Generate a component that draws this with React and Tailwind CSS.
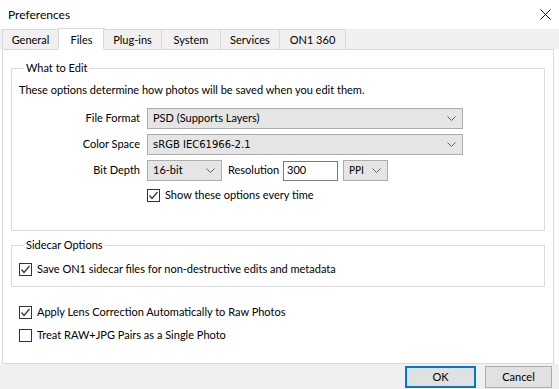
import React from 'react';

const font = { fontFamily: 'Lato, "Noto Sans", sans-serif' };

function Chevron() {
  return (
    <svg width="9" height="5" viewBox="0 0 9 5" className="shrink-0">
      <path d="M0.5 0.5 L4.5 4.5 L8.5 0.5" fill="none" stroke="#606060" strokeWidth="1" />
    </svg>
  );
}

function Select({ value, className, mono }) {
  return (
    <div
      className={
        'h-[21px] flex items-center justify-between pl-[5px] pr-[6px] border border-[#adadad] bg-[#e5e5e5] text-black ' +
        className
      }
    >
      <span className={mono ? 'font-["DejaVu_Sans"] text-[10px]' : ''}>{value}</span>
      <Chevron />
    </div>
  );
}

function Check({ checked, label, className }) {
  return (
    <div className={'flex items-center gap-[5px] h-[16px] ' + (className || '')}>
      <div className="w-[13px] h-[13px] border border-[#333] bg-white flex items-center justify-center">
        {checked && (
          <svg width="11" height="11" viewBox="0 0 11 11">
            <path d="M1.5 5.5 L4 8.5 L9.5 2" fill="none" stroke="#333" strokeWidth="1.2" />
          </svg>
        )}
      </div>
      <span>{label}</span>
    </div>
  );
}

const tabs = [
  { name: 'General', w: 'w-[57px]' },
  { name: 'Files', w: 'w-[47px]', active: true },
  { name: 'Plug-ins', w: 'w-[59px]' },
  { name: 'System', w: 'w-[60px]' },
  { name: 'Services', w: 'w-[60px]' },
  { name: 'ON1 360', w: 'w-[67px]' },
];

export default function App() {
  return (
    <div style={font} className="w-[559px] h-[389px] bg-white flex flex-col text-[11px] text-black overflow-hidden">
      {/* title bar */}
      <div className="h-[29px] flex items-center justify-between pl-[8px] pr-[8px] shrink-0">
        <span className="text-[12px] leading-none">Preferences</span>
        <svg width="11" height="11" viewBox="0 0 11 11">
          <path d="M0.5 0.5 L10.5 10.5 M10.5 0.5 L0.5 10.5" stroke="#111" strokeWidth="1" />
        </svg>
      </div>

      {/* tabs */}
      <div className="h-[20px] flex items-end pl-[2px] bg-[#f0f0f0] shrink-0 relative z-10">
        {tabs.map((t) =>
          t.active ? (
            <div
              key={t.name}
              className={t.w + ' h-[22px] -mb-[1px] -mx-[1px] bg-white border border-b-0 border-[#d9d9d9] flex items-center justify-center leading-none'}
            >
              {t.name}
            </div>
          ) : (
            <div
              key={t.name}
              className={t.w + ' h-[20px] bg-[#f0f0f0] border border-b-0 border-[#d9d9d9] -ml-[1px] first:ml-0 flex items-center justify-center leading-none'}
            >
              {t.name}
            </div>
          )
        )}
      </div>

      {/* panel */}
      <div className="flex-1 ml-[2px] mr-[5px] border border-[#d9d9d9] bg-white px-[8px] pt-[10px]">
        <fieldset className="border border-[#dcdcdc] h-[171px] px-[7px]">
          <legend className="ml-[5px] px-[2px] leading-[16px]">What to Edit</legend>
          <p className="mt-[6px] leading-[16px]">These options determine how photos will be saved when you edit them.</p>

          <div className="mt-[10px] flex flex-col gap-[5px]">
            <div className="flex items-center">
              <span className="w-[128px] text-right pr-[7px]">File Format</span>
              <Select value="PSD (Supports Layers)" className="w-[316px]" />
            </div>
            <div className="flex items-center">
              <span className="w-[128px] text-right pr-[7px]">Color Space</span>
              <Select value="sRGB IEC61966-2.1" className="w-[316px]" mono />
            </div>
            <div className="flex items-center">
              <span className="w-[128px] text-right pr-[7px]">Bit Depth</span>
              <Select value="16-bit" className="w-[75px]" />
              <span className="ml-[6px] w-[55px]">Resolution</span>
              <div className="w-[55px] h-[20px] border border-[#7a7a7a] bg-white pl-[3px] flex items-center">300</div>
              <Select value="PPI" className="w-[45px] ml-[5px]" mono />
            </div>
            <Check checked label="Show these options every time" className="ml-[128px] mt-[1px]" />
          </div>
        </fieldset>

        <fieldset className="border border-[#dcdcdc] h-[50px] mt-[6px] px-[7px]">
          <legend className="ml-[5px] px-[2px] leading-[16px]">Sidecar Options</legend>
          <Check checked label="Save ON1 sidecar files for non-destructive edits and metadata" className="mt-[8px]" />
        </fieldset>

        <div className="mt-[17px] pl-[8px] flex flex-col gap-[7px]">
          <Check checked label="Apply Lens Correction Automatically to Raw Photos" />
          <Check label="Treat RAW+JPG Pairs as a Single Photo" />
        </div>
      </div>

      {/* footer */}
      <div className="h-[25px] bg-[#f0f0f0] flex items-center justify-end gap-[9px] pr-[7px] shrink-0">
        <button className="w-[71px] h-[22px] border-2 border-[#0078d7] bg-[#e1e1e1] leading-none">OK</button>
        <button className="w-[67px] h-[22px] border border-[#adadad] bg-[#e1e1e1] leading-none">Cancel</button>
      </div>
    </div>
  );
}
